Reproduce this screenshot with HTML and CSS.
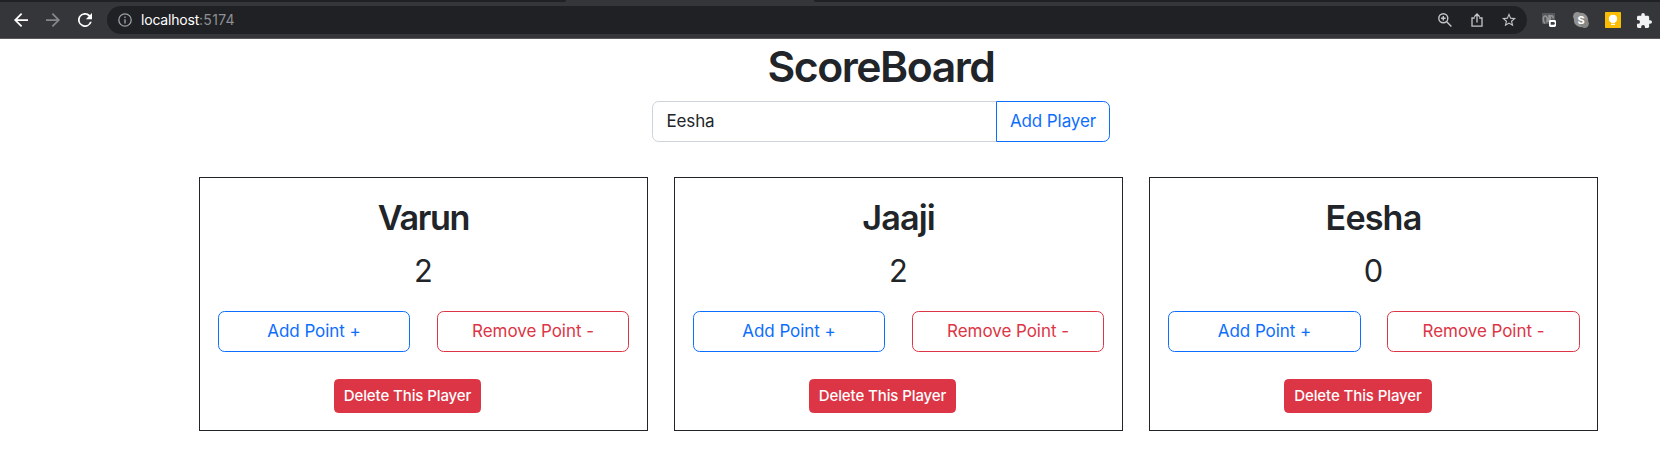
FILE: index.html
```html
<!DOCTYPE html>
<html lang="en">
<head>
<meta charset="utf-8">
<title>ScoreBoard</title>
<link rel="stylesheet" href="styles.css">
</head>
<body>
<header class="browser">
  <div class="tabstrip"><span class="tab-side tab-left"></span><span class="tab-active"></span><span class="tab-side tab-right"></span></div>
  <div class="toolbar">
    <nav class="nav">
      <svg class="icon" viewBox="4 4 16 16"><path d="M20 11H7.83l5.59-5.59L12 4l-8 8 8 8 1.41-1.41L7.83 13H20z"/></svg>
      <svg class="icon dim" viewBox="4 4 16 16"><path d="M4 11h12.17l-5.59-5.59L12 4l8 8-8 8-1.41-1.41L16.17 13H4z"/></svg>
      <svg class="icon" viewBox="4 4 16 16"><path d="M17.65 6.35A8 8 0 1 0 19.73 14h-2.08A6 6 0 1 1 12 6c1.66 0 3.14.69 4.22 1.78L13 11h7V4z"/></svg>
    </nav>
    <div class="address">
      <svg class="icon info" viewBox="0 0 14 14"><circle cx="7" cy="7" r="6.2" fill="none" stroke="currentColor" stroke-width="1.3"/><path d="M6.3 6.2h1.4v4.2H6.3zM6.3 3.5h1.4v1.5H6.3z"/></svg>
      <span class="url"><span class="host">localhost</span><span class="port">:5174</span></span>
      <div class="actions">
        <svg class="icon" viewBox="0 0 14 14" fill="none" stroke="currentColor" stroke-width="1.4"><circle cx="5.3" cy="5.3" r="4.5"/><path d="M8.7 8.7l4.7 4.7M5.3 3v4.6M3 5.3h4.6"/></svg>
        <svg class="icon" viewBox="0 0 14 14" fill="none" stroke="currentColor" stroke-width="1.3"><path d="M4.8 5H2v8.2h10V5H9.2M7 9.5V1.2M4.300 3.700L7 1l2.700 2.700"/></svg>
        <svg class="icon" viewBox="2 2 20 20"><path d="M22 9.24l-7.19-.62L12 2 9.19 8.63 2 9.24l5.46 4.73L5.82 21 12 17.27 18.18 21l-1.63-7.03zM12 15.4l-3.76 2.27 1-4.28-3.32-2.88 4.38-.38L12 6.1l1.71 4.04 4.38.38-3.32 2.88 1 4.28z"/></svg>
      </div>
    </div>
    <div class="extensions">
      <svg class="ext ext-pill" viewBox="0 0 14 14"><rect width="13" height="11" rx="1" fill="#58595b"/><path d="M3 10.500C.5 8 .8 3 3.200 3S5.800 7 4.500 9.500M6.200 3.500C7.500 2 9 2.500 8.400 5c-.4 2-1.500 4-2.100 3.100S6.800 4 8.500 3c2-1 3 .5 2.600 2.500" fill="none" stroke="#929497" stroke-width="1.5"/><rect x="7" y="7" width="7" height="7" rx="1.400" fill="#fff"/><path d="M8.700 9h2.700a1.400 1.400 0 0 1 0 2.800H8.700z" fill="#3c3d40"/></svg>
      <svg class="ext ext-skype" viewBox="0 0 16 16"><circle cx="8" cy="8" r="7.200" fill="#929292"/><circle cx="4.400" cy="4.400" r="4.300" fill="#929292"/><circle cx="11.600" cy="11.600" r="4.300" fill="#858585"/><text x="8" y="12" text-anchor="middle" class="skype-letter">S</text></svg>
      <svg class="ext ext-keep" viewBox="0 0 16 16"><rect width="16" height="16" rx=".7" fill="#fbbc04"/><circle cx="8" cy="6.800" r="4.100" fill="#fff"/><path d="M6 9h4v2H6zM6 11.800h4V13H6z" fill="#fff"/></svg>
      <svg class="ext ext-puzzle" viewBox="2 1 21 21"><path d="M20.500 11H19V7c0-1.100-.9-2-2-2h-4V3.500a2.500 2.500 0 0 0-5 0V5H4c-1.100 0-2 .9-2 2v3.800h1.500a2.700 2.700 0 0 1 0 5.400H2V20c0 1.100.9 2 2 2h3.800v-1.500a2.700 2.700 0 0 1 5.400 0V22H17c1.100 0 2-.9 2-2v-4h1.500a2.500 2.500 0 0 0 0-5z"/></svg>
    </div>
  </div>
</header>
<main class="page">
  <h1 class="title">ScoreBoard</h1>
  <form class="add-form">
    <input class="name-input" type="text" value="Eesha" aria-label="Player name">
    <button class="btn outline-blue add-player" type="button">Add Player</button>
  </form>
  <section class="players">
    <article class="card">
      <h2 class="name">Varun</h2>
      <p class="score">2</p>
      <div class="points"><button class="btn outline-blue add">Add Point +</button><button class="btn outline-red remove">Remove Point -</button></div>
      <button class="btn delete">Delete This Player</button>
    </article>
    <article class="card">
      <h2 class="name jaaji">Jaaji</h2>
      <p class="score">2</p>
      <div class="points"><button class="btn outline-blue add">Add Point +</button><button class="btn outline-red remove">Remove Point -</button></div>
      <button class="btn delete">Delete This Player</button>
    </article>
    <article class="card card-last">
      <h2 class="name eesha">Eesha</h2>
      <p class="score">0</p>
      <div class="points"><button class="btn outline-blue add">Add Point +</button><button class="btn outline-red remove">Remove Point -</button></div>
      <button class="btn delete">Delete This Player</button>
    </article>
  </section>
</main>
</body>
</html>
```

FILE: styles.css
```css
* { box-sizing: border-box; }
body { margin: 0; background: #fff; color: #212529; font-family: Inter, "Liberation Sans", sans-serif; font-size: 17px; overflow: hidden; }
h1, h2, p { margin: 0; }
svg { display: block; flex: none; fill: currentColor; }

.browser { height: 39px; background: #35363a; border-bottom: 1px solid #5a575c; }
.tabstrip { display: flex; height: 2px; }
.tab-side { background: #202124; }
.tab-left { width: 566px; border-bottom-right-radius: 3px; }
.tab-active { width: 248px; }
.tab-right { flex: 1; border-bottom-left-radius: 3px; }
.toolbar { display: flex; align-items: center; height: 36px; padding-left: 14px; }
.nav { display: flex; gap: 18px; width: 93px; color: #fff; }
.icon { width: 14px; height: 14px; }
.dim { color: #86878a; }
.address { display: flex; align-items: center; width: 1420px; height: 28px; padding: 0 11px; border-radius: 14px; background: #202124; color: #c4c6c9; }
.address svg[fill="none"] { fill: none; }
.info { color: #9aa0a6; }
.url { margin-left: 9px; font-size: 14px; line-height: 20px; }
.host { color: #fff; letter-spacing: -0.2px; }
.port { color: #8d9094; letter-spacing: 0.3px; }
.actions { display: flex; gap: 18px; margin-left: auto; }
.extensions { display: flex; align-items: center; margin-left: 15px; color: #f1f3f4; }
.ext-pill { width: 14px; height: 14px; }
.ext-skype { width: 16px; height: 16px; margin-left: 17px; }
.ext-keep { width: 16px; height: 16px; margin-left: 16px; }
.ext-puzzle { width: 15px; height: 15px; margin-left: 16px; }
.skype-letter { font-size: 11px; font-weight: 700; fill: #fff; }

.page { display: flex; flex-direction: column; align-items: center; padding-left: 102px; }
.title { height: 53px; font-size: 42.7px; font-weight: 600; line-height: 55px; letter-spacing: -1.45px; }
.add-form { display: flex; width: 458px; height: 41px; margin: 9px 0 35px; }
.name-input { width: 345px; margin-right: -1px; padding: 0 13.5px 1px; border: 1px solid #ced4da; border-radius: 6.6px 0 0 6.6px; background: #fff; color: #212529; font: inherit; letter-spacing: -0.15px; }
.btn { padding: 0 0 1px; border: 1px solid; border-radius: 6.6px; background: #fff; font: inherit; white-space: nowrap; }
.outline-blue { color: #0d6efd; }
.outline-red { color: #dc3545; }
.add-player { width: 114px; border-radius: 0 6.6px 6.6px 0; letter-spacing: -0.1px; }
.players { display: grid; grid-template-columns: repeat(3, 449px); gap: 26px; align-self: flex-start; margin-left: 97px; }
.card { display: flex; flex-direction: column; align-items: center; height: 254px; padding: 19px 18px 17px; border: 1px solid #212529; }
.name { height: 42px; font-size: 34.2px; font-weight: 600; line-height: 42px; letter-spacing: -1.3px; }
.jaaji { letter-spacing: -0.9px; }
.eesha { letter-spacing: -0.9px; }
.score { height: 42px; margin-top: 11px; font-size: 30.8px; line-height: 42px; }
.points { display: flex; justify-content: space-between; width: 411px; height: 41px; margin-top: 19px; }
.points .btn { width: 192px; }
.card-last .points { width: 412px; margin-right: -1px; }
.card-last .points .btn { width: 193px; }
.add, .remove { letter-spacing: -0.05px; }
.btn.delete { align-self: flex-start; width: 147px; height: 34px; margin: 27px 0 0 116px; border-color: #dc3545; border-radius: 4.4px; background: #dc3545; color: #fff; font-size: 15px; font-weight: 500; letter-spacing: -0.1px; }
.card-last .delete { width: 148px; }
```
